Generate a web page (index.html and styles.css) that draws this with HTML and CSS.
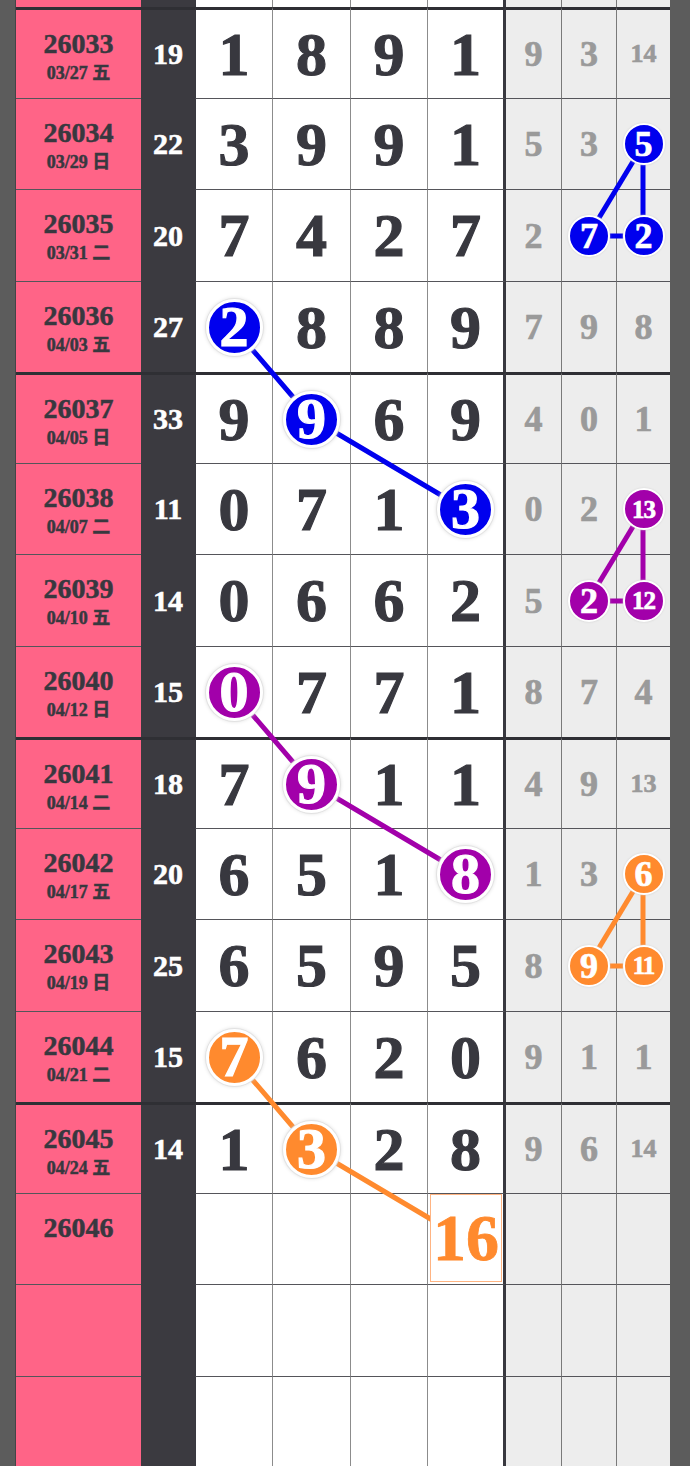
FILE: index.html
```html
<!DOCTYPE html>
<html lang="zh">
<head>
    <meta charset="UTF-8">
    <meta name="viewport" content="width=device-width, initial-scale=1.0">
    <title>走势图</title>
    <link rel="stylesheet" href="styles.css">
</head>
<body>

<div class="board">

    <!-- 连线层 -->
    <svg class="lines" width="690" height="1467" viewBox="0 0 690 1467">
        <g stroke="#0000ee" stroke-width="5" fill="none">
            <polyline points="233,327 311,418 466,510"/>
            <line x1="643" y1="145" x2="588" y2="236"/>
            <line x1="643" y1="145" x2="643" y2="236"/>
            <line x1="588" y1="236" x2="643" y2="236"/>
        </g>
        <g stroke="#a200aa" stroke-width="5" fill="none">
            <polyline points="233,692 311,783 466,875"/>
            <line x1="643" y1="510" x2="588" y2="601"/>
            <line x1="643" y1="510" x2="643" y2="601"/>
            <line x1="588" y1="601" x2="643" y2="601"/>
        </g>
        <g stroke="#ff8a2e" stroke-width="5" fill="none">
            <polyline points="233,1057 311,1148 466,1240"/>
            <line x1="643" y1="875" x2="588" y2="966"/>
            <line x1="643" y1="875" x2="643" y2="966"/>
            <line x1="588" y1="966" x2="643" y2="966"/>
        </g>
    </svg>

    <div class="row top">
        <div class="issue"></div><div class="sum"></div>
        <div class="num c1"></div><div class="num"></div><div class="num"></div><div class="num c4"></div>
        <div class="gap"></div><div class="gap"></div><div class="gap"></div>
    </div>

    <div class="row thick">
        <div class="issue"><b>26033</b><small>03/27 五</small></div><div class="sum">19</div>
        <div class="num c1">1</div><div class="num">8</div><div class="num">9</div><div class="num c4">1</div>
        <div class="gap">9</div><div class="gap">3</div><div class="gap two">14</div>
    </div>
    <div class="row">
        <div class="issue"><b>26034</b><small>03/29 日</small></div><div class="sum">22</div>
        <div class="num c1">3</div><div class="num">9</div><div class="num">9</div><div class="num c4">1</div>
        <div class="gap">5</div><div class="gap">3</div><div class="gap"><span class="dot blue">5</span></div>
    </div>
    <div class="row tall">
        <div class="issue"><b>26035</b><small>03/31 二</small></div><div class="sum">20</div>
        <div class="num c1">7</div><div class="num">4</div><div class="num">2</div><div class="num c4">7</div>
        <div class="gap">2</div><div class="gap"><span class="dot blue">7</span></div><div class="gap"><span class="dot blue">2</span></div>
    </div>
    <div class="row">
        <div class="issue"><b>26036</b><small>04/03 五</small></div><div class="sum">27</div>
        <div class="num c1"><span class="ball blue">2</span></div><div class="num">8</div><div class="num">8</div><div class="num c4">9</div>
        <div class="gap">7</div><div class="gap">9</div><div class="gap">8</div>
    </div>

    <div class="row thick">
        <div class="issue"><b>26037</b><small>04/05 日</small></div><div class="sum">33</div>
        <div class="num c1">9</div><div class="num"><span class="ball blue">9</span></div><div class="num">6</div><div class="num c4">9</div>
        <div class="gap">4</div><div class="gap">0</div><div class="gap">1</div>
    </div>
    <div class="row">
        <div class="issue"><b>26038</b><small>04/07 二</small></div><div class="sum">11</div>
        <div class="num c1">0</div><div class="num">7</div><div class="num">1</div><div class="num c4"><span class="ball blue">3</span></div>
        <div class="gap">0</div><div class="gap">2</div><div class="gap"><span class="dot purple two">13</span></div>
    </div>
    <div class="row tall">
        <div class="issue"><b>26039</b><small>04/10 五</small></div><div class="sum">14</div>
        <div class="num c1">0</div><div class="num">6</div><div class="num">6</div><div class="num c4">2</div>
        <div class="gap">5</div><div class="gap"><span class="dot purple">2</span></div><div class="gap"><span class="dot purple two">12</span></div>
    </div>
    <div class="row">
        <div class="issue"><b>26040</b><small>04/12 日</small></div><div class="sum">15</div>
        <div class="num c1"><span class="ball purple">0</span></div><div class="num">7</div><div class="num">7</div><div class="num c4">1</div>
        <div class="gap">8</div><div class="gap">7</div><div class="gap">4</div>
    </div>

    <div class="row thick">
        <div class="issue"><b>26041</b><small>04/14 二</small></div><div class="sum">18</div>
        <div class="num c1">7</div><div class="num"><span class="ball purple">9</span></div><div class="num">1</div><div class="num c4">1</div>
        <div class="gap">4</div><div class="gap">9</div><div class="gap two">13</div>
    </div>
    <div class="row">
        <div class="issue"><b>26042</b><small>04/17 五</small></div><div class="sum">20</div>
        <div class="num c1">6</div><div class="num">5</div><div class="num">1</div><div class="num c4"><span class="ball purple">8</span></div>
        <div class="gap">1</div><div class="gap">3</div><div class="gap"><span class="dot orange">6</span></div>
    </div>
    <div class="row tall">
        <div class="issue"><b>26043</b><small>04/19 日</small></div><div class="sum">25</div>
        <div class="num c1">6</div><div class="num">5</div><div class="num">9</div><div class="num c4">5</div>
        <div class="gap">8</div><div class="gap"><span class="dot orange">9</span></div><div class="gap"><span class="dot orange two">11</span></div>
    </div>
    <div class="row">
        <div class="issue"><b>26044</b><small>04/21 二</small></div><div class="sum">15</div>
        <div class="num c1"><span class="ball orange">7</span></div><div class="num">6</div><div class="num">2</div><div class="num c4">0</div>
        <div class="gap">9</div><div class="gap">1</div><div class="gap">1</div>
    </div>

    <div class="row thick">
        <div class="issue"><b>26045</b><small>04/24 五</small></div><div class="sum">14</div>
        <div class="num c1">1</div><div class="num"><span class="ball orange">3</span></div><div class="num">2</div><div class="num c4">8</div>
        <div class="gap">9</div><div class="gap">6</div><div class="gap two">14</div>
    </div>
    <div class="row">
        <div class="issue"><b>26046</b></div><div class="sum"></div>
        <div class="num c1"></div><div class="num"></div><div class="num"></div><div class="num c4 guess"><span class="box">16</span></div>
        <div class="gap"></div><div class="gap"></div><div class="gap"></div>
    </div>
    <div class="row tall">
        <div class="issue"></div><div class="sum"></div>
        <div class="num c1"></div><div class="num"></div><div class="num"></div><div class="num c4"></div>
        <div class="gap"></div><div class="gap"></div><div class="gap"></div>
    </div>
    <div class="row">
        <div class="issue"></div><div class="sum"></div>
        <div class="num c1"></div><div class="num"></div><div class="num"></div><div class="num c4"></div>
        <div class="gap"></div><div class="gap"></div><div class="gap"></div>
    </div>

</div>

</body>
</html>
```

FILE: styles.css
```css
/* Página */
* {
    box-sizing: border-box;
}

body {
    margin: 0;
    background-color: #5c5c5c;
    font-family: "Liberation Serif", "Noto Sans CJK SC", serif;
    font-weight: bold;
    color: #38383f;
    overflow: hidden;
}

.board {
    position: relative;
    width: 655px;
    margin-left: 15px;
    border-left: 1px solid #444448;
}

/* Filas */
.row {
    display: grid;
    grid-template-columns: 125px 54px 77px 78px 77px 79px 55px 55px 54px;
    height: 91px;
}

.row.tall {
    height: 92px;
}

.row.top {
    height: 7px;
}

.row > div {
    border-top: 1px solid #55555a;
}

.row.top > div {
    border-top: none;
}

.row > .sum {
    border-top-color: #3b3a40;
}

.row.thick > div {
    border-top: 3px solid #2f2f34;
}

/* Columnas */
.issue {
    background-color: #ff6487;
    text-align: center;
    padding-top: 17px;
    -webkit-text-stroke: 0.5px currentColor;
}

.issue b {
    display: block;
    font-size: 28px;
    line-height: 34px;
}

.issue small {
    display: block;
    font-size: 18px;
    line-height: 24px;
}

.sum {
    background-color: #3b3a40;
    color: #fff;
    font-size: 30px;
    -webkit-text-stroke: 0.6px currentColor;
    display: flex;
    align-items: center;
    justify-content: center;
}

.num {
    background-color: #fff;
    border-left: 1px solid #8c8c8c;
    font-size: 62px;
    -webkit-text-stroke: 1.2px currentColor;
    display: flex;
    align-items: center;
    justify-content: center;
}

.num.c1 {
    border-left: 1px solid #38383f;
}

.num.c4 {
    border-right: 3px solid #38383f;
}

.gap {
    background-color: #ededed;
    border-left: 1px solid #7a7a7a;
    color: #9a9a9a;
    font-size: 36px;
    -webkit-text-stroke: 0.7px currentColor;
    display: flex;
    align-items: center;
    justify-content: center;
}

.gap:nth-child(7) {
    border-left: none;
}

.gap.two {
    font-size: 26px;
}

/* Bolas y conexiones */
.lines {
    position: absolute;
    left: -16px;
    top: 0;
    z-index: 1;
}

.ball,
.dot,
.box {
    position: relative;
    z-index: 2;
    display: flex;
    align-items: center;
    justify-content: center;
    line-height: 1;
}

.ball {
    width: 57px;
    height: 57px;
    border-radius: 50%;
    border: 3px solid #fff;
    box-shadow: 0 0 0 1px #e2e2e2, 0 0 4px #cfcfcf;
    color: #fff;
    font-size: 58px;
}

.dot {
    width: 42px;
    height: 42px;
    border-radius: 50%;
    border: 2px solid #fff;
    box-shadow: 0 0 2px #cfcfcf;
    color: #fff;
    font-size: 36px;
}

.dot.two {
    font-size: 25px;
    letter-spacing: -1px;
}

.blue {
    background-color: #0000ee;
}

.purple {
    background-color: #a200aa;
}

.orange {
    background-color: #ff8a2e;
}

.num.guess {
    padding: 0 1px 2px 2px;
    align-items: stretch;
    justify-content: stretch;
    -webkit-text-stroke: 0.8px currentColor;
}

.box {
    width: 100%;
    background-color: #fff;
    border: 1px solid #ffb482;
    color: #ff8a2e;
    font-size: 66px;
}
```
